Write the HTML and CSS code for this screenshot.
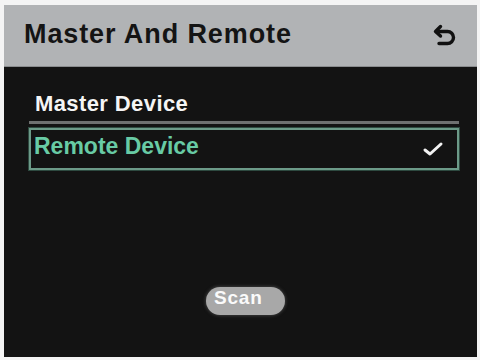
FILE: index.html
```html
<!DOCTYPE html>
<html>
<head>
<meta charset="utf-8">
<link rel="stylesheet" href="styles.css">
</head>
<body>
<div class="screen">
  <header class="header">
    <h1 class="title">Master And Remote</h1>
    <svg class="back" width="26" height="22" viewBox="0 0 26 22">
      <path d="M8.5 2.5 L3.5 7.5 L8.5 12" fill="none" stroke="#111" stroke-width="3.4" stroke-linecap="round" stroke-linejoin="round"/>
      <path d="M5 7.5 H15.5 A6 6 0 0 1 15.5 19.5 H7" fill="none" stroke="#111" stroke-width="3.4" stroke-linecap="round"/>
    </svg>
  </header>
  <main class="body">
    <div class="item">Master Device</div>
    <div class="sep"></div>
    <div class="item selected">
      <span>Remote Device</span>
      <svg class="check" width="22" height="16" viewBox="0 0 22 16">
        <path d="M3 9 L8 13 L19 3" fill="none" stroke="#f2f2f2" stroke-width="3" stroke-linecap="round" stroke-linejoin="round"/>
      </svg>
    </div>
    <div class="spacer"></div>
    <div class="actions"><button class="scan">Scan</button></div>
  </main>
</div>
</body>
</html>
```

FILE: styles.css
```css
html, body {
  margin: 0;
  padding: 0;
  background: #f4f4f4;
}
body {
  width: 480px;
  height: 360px;
  padding: 5px 3px 3px 4px;
  box-sizing: border-box;
  font-family: "Liberation Sans", Arial, sans-serif;
}
.screen {
  display: flex;
  flex-direction: column;
  height: 100%;
  background: #131313;
}
.header {
  height: 62px;
  background: #b1b3b5;
  display: flex;
  align-items: center;
  justify-content: space-between;
  padding: 0 19px 0 20px;
  box-sizing: border-box;
  border-bottom: 1px solid #8a8c8e;
}
.title {
  margin: 0;
  font-size: 27px;
  font-weight: bold;
  color: #141414;
  letter-spacing: 0.9px;
  padding-bottom: 2px;
}
.back {
  margin-bottom: 2px;
}
.body {
  flex: 1;
  display: flex;
  flex-direction: column;
  padding: 19px 18px 14px 25px;
}
.item {
  font-size: 22px;
  font-weight: bold;
  color: #f5f5f5;
  padding-left: 6px;
  height: 35px;
  display: flex;
  align-items: center;
  letter-spacing: 0.4px;
}
.sep {
  height: 3px;
  background: #6e7070;
  margin-bottom: 4px;
}
.selected {
  font-size: 23px;
  height: 42px;
  border: 2px solid #6c9a88;
  box-sizing: border-box;
  color: #68cba5;
  padding: 0 13px 6px 3px;
  justify-content: space-between;
  outline: 1px solid #2e4a40;
  letter-spacing: 0;
}
.check {
  margin-top: 6px;
}
.spacer {
  flex: 1;
}
.actions {
  display: flex;
  justify-content: center;
  padding-left: 3px;
}
.scan {
  width: 79px;
  height: 28px;
  border: none;
  border-radius: 14px;
  background: #a8a8a8;
  color: #fafafa;
  font-family: "Liberation Sans", Arial, sans-serif;
  font-size: 19px;
  font-weight: bold;
  letter-spacing: 0.8px;
  text-align: left;
  padding: 0 0 7px 8px;
  margin-bottom: 28px;
  box-shadow: 0 0 3px 1px #3a3a3a;
}
```
